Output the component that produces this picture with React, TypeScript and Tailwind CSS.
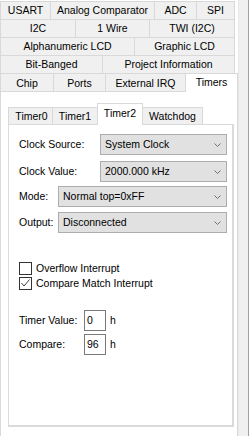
import React from 'react'

type Tab = { label: string; w: string }

const rows: Tab[][] = [
  [
    { label: 'USART', w: 'w-[50px]' },
    { label: 'Analog Comparator', w: 'w-[104px]' },
    { label: 'ADC', w: 'w-[42px]' },
    { label: 'SPI', w: 'w-[39px]' },
  ],
  [
    { label: 'I2C', w: 'w-[75px]' },
    { label: '1 Wire', w: 'w-[74px]' },
    { label: 'TWI (I2C)', w: 'w-[86px]' },
  ],
  [
    { label: 'Alphanumeric LCD', w: 'w-[134px]' },
    { label: 'Graphic LCD', w: 'w-[101px]' },
  ],
  [
    { label: 'Bit-Banged', w: 'w-[102px]' },
    { label: 'Project Information', w: 'w-[133px]' },
  ],
]

const TabRow = ({ tabs }: { tabs: Tab[] }) => (
  <div className="flex h-[18px]">
    {tabs.map((t, i) => (
      <div
        key={t.label}
        className={`${t.w} h-full flex items-center justify-center bg-[#f0f0f0] border-l border-t border-[#d9d9d9] ${
          i === tabs.length - 1 ? 'border-r' : ''
        }`}
      >
        {t.label}
      </div>
    ))}
  </div>
)

const Chevron = () => (
  <svg width="7" height="4" viewBox="0 0 7 4" className="block">
    <polyline points="0.5,0.5 3.5,3.5 6.5,0.5" fill="none" stroke="#707070" strokeWidth="1" />
  </svg>
)

const Combo = ({ value, w }: { value: string; w: string }) => (
  <div className={`${w} h-[21px] flex items-center justify-between bg-[#e1e1e1] border border-[#adadad] pl-[4px] pr-[5px]`}>
    <span>{value}</span>
    <Chevron />
  </div>
)

const Check = ({ checked, label }: { checked?: boolean; label: string }) => (
  <div className="flex items-center h-[13px]">
    <div className="w-[13px] h-[13px] border border-[#333333] bg-white flex items-center justify-center">
      {checked && (
        <svg width="11" height="11" viewBox="0 0 11 11" className="block">
          <polyline points="1.5,5 4,8 9.5,1.5" fill="none" stroke="#404040" strokeWidth="1" />
        </svg>
      )}
    </div>
    <span className="ml-[4px]">{label}</span>
  </div>
)

const HexBox = ({ label, value }: { label: string; value: string }) => (
  <div className="flex items-center h-[21px]">
    <span className="w-[65px]">{label}</span>
    <div className="w-[22px] h-[21px] border border-[#7a7a7a] bg-white flex items-center pl-[2px]">{value}</div>
    <span className="ml-[4px]">h</span>
  </div>
)

export default function App() {
  return (
    <div
      className="w-[249px] h-[436px] flex bg-white overflow-hidden text-black text-[10.5px] leading-none"
      style={{ fontFamily: '"Liberation Sans", Arial, sans-serif' }}
    >
      <div className="w-[238px] flex flex-col pt-[1px]">
        {rows.map((r, i) => (
          <TabRow key={i} tabs={r} />
        ))}
        <div className="flex h-[18px]">
          <div className="w-[53px] flex items-center justify-center bg-[#f0f0f0] border-l border-t border-[#d9d9d9] pt-[2px]">Chip</div>
          <div className="w-[52px] flex items-center justify-center bg-[#f0f0f0] border-l border-t border-[#d9d9d9] pt-[2px]">Ports</div>
          <div className="w-[80px] flex items-center justify-center bg-[#f0f0f0] border-l border-t border-[#d9d9d9] pt-[2px]">External IRQ</div>
          <div className="w-[53px] h-[19px] relative z-10 flex items-center justify-center bg-white border-l border-t border-r border-[#d9d9d9] pb-[1px]">Timers</div>
        </div>
        <div className="flex-1 bg-white border-t border-l border-r border-[#d9d9d9] pt-[11px] pl-[7px] pr-[3px]">
          <div className="flex items-end h-[21px]">
            <div className="w-[44px] h-[17px] flex items-center justify-center bg-[#f0f0f0] border-l border-t border-[#d9d9d9] pl-[2px]">Timer0</div>
            <div className="w-[45px] h-[17px] flex items-center justify-center bg-[#f0f0f0] border-l border-t border-[#d9d9d9]">Timer1</div>
            <div className="w-[46px] h-[22px] -mb-px relative z-10 flex items-center justify-center bg-white border-l border-t border-r border-[#d9d9d9] pb-[2px]">Timer2</div>
            <div className="w-[60px] h-[17px] flex items-center justify-center bg-[#f0f0f0] border-t border-r border-[#d9d9d9]">Watchdog</div>
          </div>
          <div className="h-[303px] bg-white border border-r-2 border-b-2 border-[#dadada] pt-[9px] pl-[10px]">
            <div className="flex items-center h-[21px]">
              <span className="w-[81px]">Clock Source:</span>
              <Combo value="System Clock" w="w-[127px]" />
            </div>
            <div className="flex items-center h-[21px] mt-[6px]">
              <span className="w-[81px]">Clock Value:</span>
              <Combo value="2000.000 kHz" w="w-[127px]" />
            </div>
            <div className="flex items-center h-[21px] mt-[4px]">
              <span className="w-[39px]">Mode:</span>
              <Combo value="Normal top=0xFF" w="w-[169px]" />
            </div>
            <div className="flex items-center h-[21px] mt-[5px]">
              <span className="w-[39px]">Output:</span>
              <Combo value="Disconnected" w="w-[169px]" />
            </div>
            <div className="mt-[29px]">
              <Check label="Overflow Interrupt" />
            </div>
            <div className="mt-[2px]">
              <Check checked label="Compare Match Interrupt" />
            </div>
            <div className="mt-[20px]">
              <HexBox label="Timer Value:" value="0" />
            </div>
            <div className="mt-[3px]">
              <HexBox label="Compare:" value="96" />
            </div>
          </div>
        </div>
      </div>
      <div className="w-[11px] bg-[#f0f0f0] border-l border-[#e8e8e8] border-r border-r-[#a0a0a0]" />
    </div>
  )
}
